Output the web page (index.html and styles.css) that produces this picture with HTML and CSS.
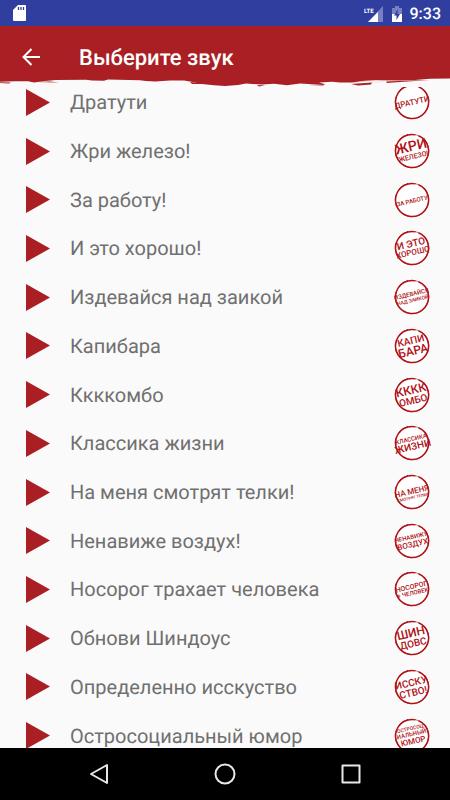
FILE: index.html
```html
<!DOCTYPE html>
<html lang="ru">
<head>
<meta charset="utf-8">
<meta name="viewport" content="width=device-width, initial-scale=1">
<title>Выберите звук</title>
<link rel="stylesheet" href="styles.css">
</head>
<body>
<svg class="defs" aria-hidden="true">
  <symbol id="play" viewBox="0 0 24 27"><path d="M0 0L24 13.5L0 27Z"/></symbol>
  <symbol id="ring" viewBox="0 0 36 36">
    <circle cx="18" cy="18" r="17" fill="#fff"/>
    <path d="M24.500 2.800A16.500 16.500 0 1 1 14 2Q18 .9 21.500 1.900" fill="none" stroke="#b01217" stroke-width="1.500"/>
    <path d="M30 6A17 17 0 0 1 24 33.500M17 34.800A17 17 0 0 1 2.200 12.500M5 7A17 17 0 0 1 14 1.500" fill="none" stroke="#b01217" stroke-width="1"/>
    <path d="M21 1.600L25 2.800" stroke="#b01217" stroke-width=".6"/>
  </symbol>
</svg>
<div class="screen">
  <div class="status">
    <svg width="13" height="17" viewBox="0 0 13 17" aria-hidden="true"><path d="M5 0H12Q13 0 13 1V15Q13 16 12 16H1Q0 16 0 15V5Z" fill="#fff"/><path d="M5.500 2V5M8 2V5M10.500 2V5" stroke="#303f9f" stroke-width="1.300"/></svg>
    <div class="status-right">
      <svg width="20" height="16" viewBox="0 0 20 16" aria-hidden="true"><path d="M19 0V16H4Z" fill="#7781c1"/><path d="M14 6V16H4Z" fill="#fff"/><rect width="11" height="8" fill="#303f9f"/><text class="lte" x="0" y="7">LTE</text></svg>
      <svg width="10" height="16" viewBox="0 0 10 16" aria-hidden="true"><path d="M3 0H7V2H10V16H0V2H3Z" fill="#7781c1"/><path d="M0 8H10V16H0Z" fill="#fff"/><path d="M6 3L2 9.500H4.500V14L8 8H5.500Z" fill="#303f9f"/></svg>
      <time>9:33</time>
    </div>
  </div>
  <header class="bar">
    <button class="back" aria-label="Назад"><svg width="18" height="18" viewBox="0 0 18 18"><path d="M18 9H1.500M9.500 1L1.500 9L9.500 17" fill="none" stroke="#fff" stroke-width="2"/></svg></button>
    <h1>Выберите звук</h1>
    <svg class="torn" viewBox="0 0 450 9" preserveAspectRatio="none" aria-hidden="true">
      <path d="M0 0H450V.6L430 .8L415 2L400 2.400L375 2.300L352 4.600L340 4.500L332 3.800L319 4.600L325 6.200L308 6L300 5.500L287 7.300L274 5.800L262 6.500L246 5.500L238 7L225 8L214 7.200L202 6L193 4L184 2.600L170 2.500L155 3.400L146 3L140 2.200L108 1.600L104 2.800L92 2.600L86 1.800L56 2L45 3L34 4.500L28 3.200L15 3.200L0 3.800Z" fill="#a91f23"/>
      <path d="M0 4.200L11 4.600L9 5.500L0 5ZM36 4L50 3.400L59 4.600L46 4.300ZM190 4L200 5L206 6L192 6ZM257 7L265 7.500L259 8.500ZM308 7L325 6L323 7.500ZM351 6L372 4.500L371 6.500L358 7.500ZM386 3.600L410 2.600L430 2L400 4L387 5Z" fill="#a91f23"/>
      <path d="M355 4.500L366 3L381 3M372 4.500L384 3.500" stroke="#f5dede" stroke-width=".8" fill="none"/>
    </svg>
  </header>
  <main>
    <ul class="sounds">
      <li><button class="play" aria-label="Играть"><svg><use href="#play"/></svg></button><span>Дратути</span><svg class="stamp" viewBox="0 0 36 36"><use href="#ring"/><g transform="rotate(-13 18 18)"><text class="t8" x="18" y="21">ДРАТУТИ</text></g></svg></li>
      <li><button class="play" aria-label="Играть"><svg><use href="#play"/></svg></button><span>Жри железо!</span><svg class="stamp" viewBox="0 0 36 36"><use href="#ring"/><g transform="rotate(-13 18 18)"><text class="t14" x="18" y="18">ЖРИ</text><text class="t7" x="18" y="26">ЖЕЛЕЗО!</text></g></svg></li>
      <li><button class="play" aria-label="Играть"><svg><use href="#play"/></svg></button><span>За работу!</span><svg class="stamp" viewBox="0 0 36 36"><use href="#ring"/><g transform="rotate(-13 18 18)"><text class="t6" x="18" y="21">ЗА РАБОТУ</text></g></svg></li>
      <li><button class="play" aria-label="Играть"><svg><use href="#play"/></svg></button><span>И это хорошо!</span><svg class="stamp" viewBox="0 0 36 36"><use href="#ring"/><g transform="rotate(-13 18 18)"><text class="t10" x="18" y="17">И ЭТО</text><text class="t8" x="18" y="25">ХОРОШО</text></g></svg></li>
      <li><button class="play" aria-label="Играть"><svg><use href="#play"/></svg></button><span>Издевайся над заикой</span><svg class="stamp" viewBox="0 0 36 36"><use href="#ring"/><g transform="rotate(-13 18 18)"><text class="t6" x="18" y="17">ИЗДЕВАЙСЯ</text><text class="t5" x="18" y="23">НАД ЗАИКОЙ</text></g></svg></li>
      <li><button class="play" aria-label="Играть"><svg><use href="#play"/></svg></button><span>Капибара</span><svg class="stamp" viewBox="0 0 36 36"><use href="#ring"/><g transform="rotate(-13 18 18)"><text class="t10" x="18" y="16">КАПИ</text><text class="t12" x="18" y="27">БАРА</text></g></svg></li>
      <li><button class="play" aria-label="Играть"><svg><use href="#play"/></svg></button><span>Ккккомбо</span><svg class="stamp" viewBox="0 0 36 36"><use href="#ring"/><g transform="rotate(-13 18 18)"><text class="t12" x="18" y="17">КККК</text><text class="t10" x="18" y="27">ОМБО</text></g></svg></li>
      <li><button class="play" aria-label="Играть"><svg><use href="#play"/></svg></button><span>Классика жизни</span><svg class="stamp" viewBox="0 0 36 36"><use href="#ring"/><g transform="rotate(-13 18 18)"><text class="t6" x="18" y="16">КЛАССИКА</text><text class="t10" x="18" y="25">ЖИЗНИ</text></g></svg></li>
      <li><button class="play" aria-label="Играть"><svg><use href="#play"/></svg></button><span>На меня смотрят телки!</span><svg class="stamp" viewBox="0 0 36 36"><use href="#ring"/><g transform="rotate(-13 18 18)"><text class="t8" x="18" y="20">НА МЕНЯ</text><text class="t4" x="18" y="25">СМОТРЯТ ТЕЛКИ</text></g></svg></li>
      <li><button class="play" aria-label="Играть"><svg><use href="#play"/></svg></button><span>Ненавиже воздух!</span><svg class="stamp" viewBox="0 0 36 36"><use href="#ring"/><g transform="rotate(-13 18 18)"><text class="t6" x="18" y="16">НЕНАВИЖУ</text><text class="t8" x="18" y="24">ВОЗДУХ</text></g></svg></li>
      <li><button class="play" aria-label="Играть"><svg><use href="#play"/></svg></button><span>Носорог трахает человека</span><svg class="stamp" viewBox="0 0 36 36"><use href="#ring"/><g transform="rotate(-13 18 18)"><text class="t7" x="18" y="18">НОСОРОГ</text><text class="t6" x="18" y="24">+ ЧЕЛОВЕК</text></g></svg></li>
      <li><button class="play" aria-label="Играть"><svg><use href="#play"/></svg></button><span>Обнови Шиндоус</span><svg class="stamp" viewBox="0 0 36 36"><use href="#ring"/><g transform="rotate(-13 18 18)"><text class="t12" x="18" y="17">ШИН</text><text class="t10" x="18" y="27">ДОВС</text></g></svg></li>
      <li><button class="play" aria-label="Играть"><svg><use href="#play"/></svg></button><span>Определенно исскуство</span><svg class="stamp" viewBox="0 0 36 36"><use href="#ring"/><g transform="rotate(-13 18 18)"><text class="t10" x="18" y="17">ИССКУ</text><text class="t10" x="18" y="27">СТВО!</text></g></svg></li>
      <li><button class="play" aria-label="Играть"><svg><use href="#play"/></svg></button><span>Остросоциальный юмор</span><svg class="stamp" viewBox="0 0 36 36"><use href="#ring"/><g transform="rotate(-13 18 18)"><text class="t5" x="18" y="12">ОСТРОСОЦ</text><text class="t6" x="18" y="18">ИАЛЬНЫЙ</text><text class="t8" x="18" y="26">ЮМОР</text></g></svg></li>
    </ul>
  </main>
  <nav class="nav">
    <button aria-label="Назад"><svg width="20" height="22" viewBox="0 0 20 22"><path d="M18 2V20L2 11Z"/></svg></button>
    <button aria-label="Домой"><svg width="22" height="22" viewBox="0 0 22 22"><circle cx="11" cy="11" r="9.500"/></svg></button>
    <button aria-label="Обзор"><svg width="20" height="20" viewBox="0 0 20 20"><rect x="1.500" y="1.500" width="17" height="17"/></svg></button>
  </nav>
</div>
</body>
</html>
```
FILE: styles.css
```css
* { box-sizing: border-box; }
body {
  margin: 0;
  background: #fafafa;
  color: #707070;
  font-family: Roboto, "Noto Sans", sans-serif;
  text-rendering: geometricPrecision;
}
button {
  display: flex;
  align-items: center;
  justify-content: center;
  padding: 0;
  border: 0;
  background: none;
}
.defs { display: none; }
.screen {
  display: flex;
  flex-direction: column;
  height: 100vh;
}
.status {
  display: flex;
  flex: none;
  align-items: center;
  justify-content: space-between;
  height: 26px;
  padding: 1px 9px 0 13px;
  background: #303f9f;
  color: #fff;
}
.status-right {
  display: flex;
  align-items: center;
  gap: 8px;
}
.status time {
  font-size: 16px;
  font-weight: 500;
  line-height: 26px;
}
.lte {
  fill: #fff;
  font-size: 6px;
  font-weight: 700;
}
.bar {
  position: relative;
  z-index: 1;
  display: flex;
  flex: none;
  align-items: center;
  gap: 30px;
  height: 52px;
  padding: 10px 22px 0;
  background: #a91f23;
  color: #fff;
}
.back {
  width: 18px;
  height: 28px;
}
.bar h1 {
  margin: 0;
  padding: 4px 0 0 9px;
  font-size: 22px;
  font-weight: 500;
  line-height: 28px;
}
.torn {
  position: absolute;
  top: 100%;
  left: 0;
  width: 100%;
  height: 9px;
  background: #fafafa;
}
main {
  flex: 1;
  min-height: 0;
  overflow: hidden;
}
.sounds {
  display: grid;
  grid-auto-rows: 1fr;
  height: calc(100% + 12px);
  margin: 0;
  padding: 0;
  list-style: none;
}
.sounds li {
  display: grid;
  grid-template-columns: 24px 1fr 36px;
  align-items: center;
  column-gap: 20px;
  padding: 0 20px 0 26px;
  font-size: 20px;
  line-height: 26px;
}
.play svg {
  width: 24px;
  height: 27px;
  fill: #a91f23;
}
.stamp {
  width: 36px;
  height: 36px;
  overflow: visible;
}
.stamp text {
  fill: #b01217;
  font-weight: 500;
  text-anchor: middle;
}
.t4 { font-size: 4px; }
.t5 { font-size: 5px; }
.t6 { font-size: 6px; }
.t7 { font-size: 7px; }
.t8 { font-size: 8px; }
.t10 { font-size: 10px; }
.t12 { font-size: 12px; }
.t14 { font-size: 14px; }
.nav {
  display: flex;
  flex: none;
  align-items: center;
  justify-content: space-around;
  height: 52px;
  padding: 0 36px;
  background: #000;
}
.nav svg {
  fill: none;
  stroke: #e8e8e8;
  stroke-width: 2;
  stroke-linejoin: round;
}
```
